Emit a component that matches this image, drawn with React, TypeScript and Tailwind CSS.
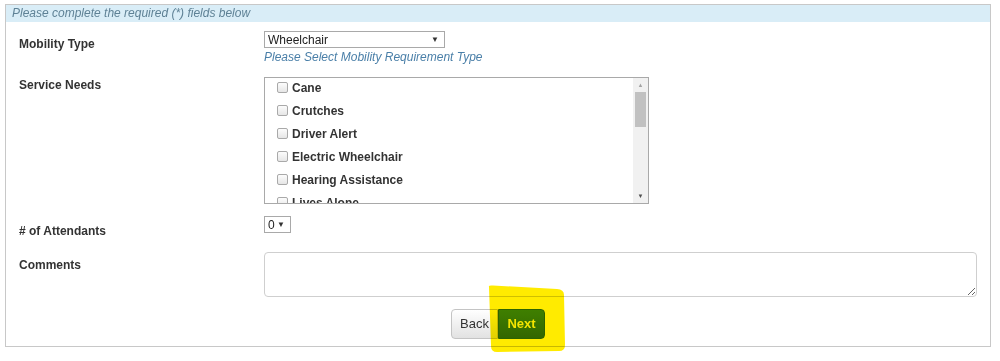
import React from 'react';

const services = ['Cane', 'Crutches', 'Driver Alert', 'Electric Wheelchair', 'Hearing Assistance', 'Lives Alone', 'Oxygen'];

const Checkbox = () => (
  <span className="inline-block w-[11px] h-[11px] rounded-[2px] border border-[#a9a9a9] bg-gradient-to-b from-[#fcfcfc] to-[#e6e6e6]" />
);

const Select = ({ value, className }: { value: string; className: string }) => (
  <div className={`flex items-center justify-between border border-[#a9a9a9] bg-white pl-[3px] pr-[5px] text-[12px] leading-[14px] text-[#222] ${className}`}>
    <span>{value}</span>
    <span className="text-[8px] text-[#333]">▼</span>
  </div>
);

const App = () => {
  return (
    <div className="w-[1000px] h-[361px] bg-white pt-[4px] pl-[5px] font-['Liberation_Sans',Arial,sans-serif] text-[#333]">
      <div className="w-[986px] h-[343px] border border-[#c8c8c8]">
        <div className="h-[17px] bg-[#d9edf7] pl-[6px] text-[12px] leading-[17px] italic text-[#5f8296]">
          Please complete the required (*) fields below
        </div>

        {/* mobility */}
        <div className="flex mt-[9px]">
          <div className="w-[258px] pl-[13px] pt-[6px] text-[12px] leading-[14px] font-bold">Mobility Type</div>
          <div>
            <Select value="Wheelchair" className="w-[181px] h-[17px]" />
            <div className="mt-[2px] text-[12px] leading-[15px] italic text-[#4a7fa8]">Please Select Mobility Requirement Type</div>
          </div>
        </div>

        {/* service needs */}
        <div className="flex mt-[12px]">
          <div className="w-[258px] pl-[13px] pt-[1px] text-[12px] leading-[14px] font-bold">Service Needs</div>
          <div className="flex w-[385px] h-[127px] border border-[#a9a9a9] bg-white overflow-hidden">
            <div className="flex-1 overflow-hidden">
              <div className="-mt-[2px]">
                {services.map((s) => (
                  <div key={s} className="flex items-center h-[23px] pl-[12px] gap-[4px] text-[12px] font-bold text-[#333]">
                    <Checkbox />
                    <span>{s}</span>
                  </div>
                ))}
              </div>
            </div>
            <div className="w-[15px] bg-[#f1f1f1] flex flex-col items-center">
              <div className="h-[14px] flex items-center justify-center text-[6px] text-[#a3a3a3]">▲</div>
              <div className="w-[11px] h-[35px] bg-[#c1c1c1]" />
              <div className="flex-1" />
              <div className="h-[14px] flex items-center justify-center text-[6px] text-[#505050]">▼</div>
            </div>
          </div>
        </div>

        {/* attendants */}
        <div className="flex mt-[12px]">
          <div className="w-[258px] pl-[13px] pt-[8px] text-[12px] leading-[14px] font-bold"># of Attendants</div>
          <Select value="0" className="w-[27px] h-[17px]" />
        </div>

        {/* comments */}
        <div className="flex mt-[14px]">
          <div className="w-[258px] pl-[13px] pt-[6px] text-[12px] leading-[14px] font-bold">Comments</div>
          <textarea readOnly className="w-[713px] h-[45px] rounded-[4px] border border-[#cfcfcf] outline-none resize" />
        </div>

        {/* buttons */}
        <div className="relative flex justify-center mt-[12px]">
          <button className="h-[30px] w-[47px] rounded-l-[4px] border border-[#c4c4c4] bg-gradient-to-b from-white to-[#e2e2e2] text-[13px] text-[#333]">
            Back
          </button>
          <button className="h-[30px] w-[47px] rounded-r-[4px] border border-[#2d6b00] bg-gradient-to-b from-[#3f8a00] to-[#336f00] text-[13px] font-bold text-[#f4f8e0]">
            Next
          </button>
          <svg className="absolute left-[479px] -top-[24px] mix-blend-multiply pointer-events-none" width="82" height="68" viewBox="0 0 82 68">
            <path d="M4 2 Q3 0 8 0.5 L72 4 Q79 4.5 79 10 L80 60 Q80 66 74 66 L12 67 Q6 67 6 61 Z" fill="#ffeb00" />
          </svg>
        </div>
      </div>
    </div>
  );
};

export default App;
